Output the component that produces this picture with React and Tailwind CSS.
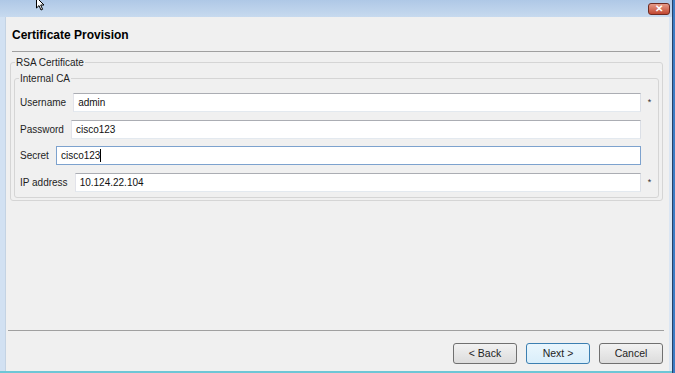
import React from "react";

const FONT = { fontFamily: '"Liberation Sans", Arial, sans-serif' };

function Field({ label, value, required, focused, caret }) {
  return (
    <div className="flex items-center h-[19px]">
      <span className="text-[10px] text-[#1e1e1e] mr-[7px] whitespace-nowrap">{label}</span>
      <div
        className={`flex-1 h-[19px] flex items-center pl-[4px] bg-white border ${
          focused
            ? "border-[#7da2ce]"
            : "border-t-[#abadb3] border-l-[#e2e3ea] border-r-[#dbdfe6] border-b-[#e3e9ef]"
        }`}
      >
        <span className="text-[10px] text-[#111]">{value}</span>
        {caret && <span className="w-[1px] h-[13px] bg-black" />}
      </div>
      <span className="w-[17px] text-center text-[9px] text-[#333] leading-none">
        {required ? "*" : ""}
      </span>
    </div>
  );
}

function Button({ children, primary }) {
  return (
    <button
      className={`w-[64px] h-[21px] rounded-[3px] border text-[10.5px] text-[#1e1e1e] bg-gradient-to-b ${
        primary
          ? "border-[#3c7fb1] from-[#eaf6fd] to-[#d9eefa]"
          : "border-[#707070] from-[#f2f2f2] to-[#dcdcdc]"
      }`}
    >
      {children}
    </button>
  );
}

export default function App() {
  return (
    <div className="flex w-[675px] h-[373px] overflow-hidden bg-[#3a78c0]" style={FONT}>
      <div className="relative flex flex-col w-[672px]">
        {/* title bar */}
        <div className="h-[17px] flex items-start justify-end pr-[2px] pt-[3px] bg-gradient-to-b from-[#afc8e6] to-[#c7daef]">
          <div className="w-[22px] h-[12px] rounded-[3px] border border-[#6e2a20] bg-gradient-to-b from-[#e59a88] to-[#c1452f] flex items-center justify-center text-white text-[10px] font-bold leading-none">
            ✕
          </div>
        </div>
        <svg className="absolute left-[36px] top-[-3px]" width="10" height="14" viewBox="0 0 10 14">
          <path d="M0.5 0.5 L0.5 11 L3 8.6 L5 13 L6.6 12.3 L4.7 8 L8 8 Z" fill="#fff" stroke="#000" strokeWidth="1" />
        </svg>

        <div className="flex flex-1">
          <div className="w-[6px] bg-[#d2e1f2] border-r border-[#c4d3e3]" />
          <div className="flex-1 flex flex-col bg-[#f0f0f0]">
            <div className="pt-[10px] pl-[6px] text-[12px] font-bold leading-[16px] text-black">
              Certificate Provision
            </div>
            <div className="mt-[8px] ml-[6px] mr-[9px] h-[1px] bg-[#a0a0a0]" />

            <fieldset className="mt-[4px] ml-[4px] mr-[6px] border border-[#d5d5d5] rounded-[3px] px-[3px] pb-[2px]">
              <legend className="ml-[1px] px-[1px] text-[10px] leading-[13px] text-[#1e1e1e]">
                RSA Certificate
              </legend>
              <fieldset className="mt-[3px] border border-[#d5d5d5] rounded-[3px] pl-[5px] pt-[8px] pb-[5px]">
                <legend className="ml-[-1px] px-[1px] text-[10px] leading-[13px] text-[#1e1e1e]">
                  Internal CA
                </legend>
                <div className="flex flex-col gap-[7.5px]">
                  <Field label="Username" value="admin" required />
                  <Field label="Password" value="cisco123" />
                  <Field label="Secret" value="cisco123" focused caret />
                  <Field label="IP address" value="10.124.22.104" required />
                </div>
              </fieldset>
            </fieldset>

            <div className="flex-1" />
            <div className="ml-[2px] mr-[5px] h-[1px] bg-[#a0a0a0]" />
            <div className="flex justify-end gap-[9px] pr-[6px] pt-[12px] pb-[7px]">
              <Button>&lt; Back</Button>
              <Button primary>Next &gt;</Button>
              <Button>Cancel</Button>
            </div>
          </div>
          <div className="w-[3px] bg-[#dbe6f3]" />
        </div>
        <div className="h-[2px] bg-[#6ec6d6]" />
      </div>
      <div className="w-[1px] bg-[#24426b]" />
      <div className="w-[2px] bg-[#3d7cc4]" />
    </div>
  );
}
